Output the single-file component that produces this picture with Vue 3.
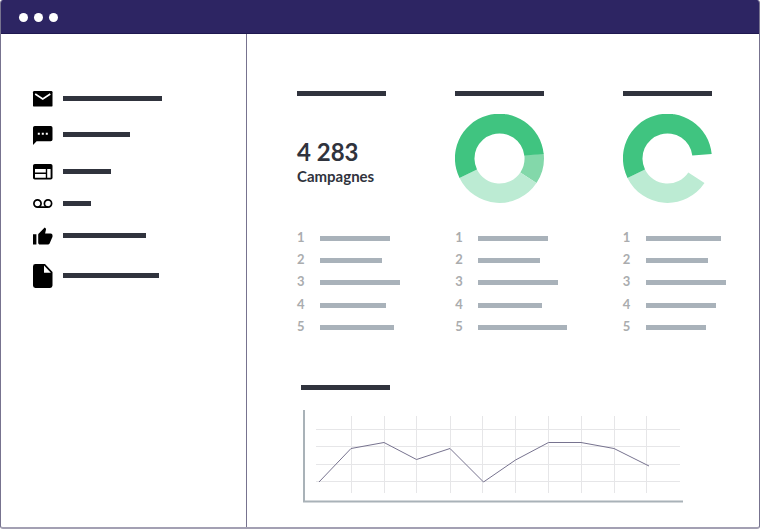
<script setup>
const links = [
  { name: 'E-mails', icon: 'mail', height: 16, width: 99 },
  { name: 'SMS', icon: 'chat', height: 19, width: 67 },
  { name: 'Pages', icon: 'web', height: 16, width: 48 },
  { name: 'Voice', icon: 'voice', height: 10, width: 28 },
  { name: 'Social', icon: 'like', height: 17, width: 83 },
  { name: 'Files', icon: 'file', height: 24, width: 96 }
]

const columns = [
  { kind: 'count', bars: [70, 62, 80, 66, 74] },
  { kind: 'full', bars: [70, 62, 80, 64, 89] },
  { kind: 'open', bars: [75, 62, 80, 70, 60] }
]

const gridX = [49, 82, 114, 148, 180, 213, 246, 279, 312, 344]
const gridY = [19, 36, 54, 71]
const points = '17,72 49,38.5 82,32.5 114.5,49.5 148,38.5 181.5,72 213.5,50 246.5,32.5 279,32.5 312,38.5 347,56'
</script>

<template>
  <div class="window">
    <header class="titlebar">
      <span class="dot"></span>
      <span class="dot"></span>
      <span class="dot"></span>
    </header>

    <div class="body">
      <nav class="sidebar">
        <a v-for="link in links" :key="link.icon" class="link" href="#" :aria-label="link.name">
          <svg class="icon" width="20" :height="link.height" :viewBox="`0 0 20 ${link.height}`" aria-hidden="true">
            <template v-if="link.icon === 'mail'">
              <rect width="19.5" height="15.6" rx="1.2" />
              <path class="cut" d="M2.2 3 9.75 7.9 17.3 3" stroke-width="1.7" />
            </template>
            <template v-else-if="link.icon === 'chat'">
              <path d="M1.8 0H17.7a1.8 1.8 0 0 1 1.8 1.8V13.4a1.8 1.8 0 0 1-1.8 1.8H3.6L0 19V1.8A1.8 1.8 0 0 1 1.8 0Z" />
              <path class="hole" d="M4.8 6.7h2v2h-2zM8.8 6.7h2v2h-2zM12.8 6.7h2v2h-2z" />
            </template>
            <template v-else-if="link.icon === 'web'">
              <rect width="19.5" height="15.6" rx="1.8" />
              <path class="hole" d="M2 5H12.8V8.6H2zM2 10H12.8V13.8H2zM14.2 5H17.6V13.8H14.2z" />
            </template>
            <template v-else-if="link.icon === 'voice'">
              <circle class="line" cx="4.5" cy="4.5" r="3.6" stroke-width="1.7" />
              <circle class="line" cx="15" cy="4.5" r="3.6" stroke-width="1.7" />
              <path class="line" d="M4.5 8.2H15" stroke-width="1.7" />
            </template>
            <template v-else-if="link.icon === 'like'">
              <path d="M0 6.2H3.4V16.6H0zM19.5 7.2a1.8 1.8 0 0 0-1.8-1.8H12.1L13 1.4c0-.5-.1-.9-.4-1.1L11.7-.4 5.8 5.4c-.4.3-.6.8-.6 1.3v8.1c0 1 .8 1.8 1.8 1.8h8c.7 0 1.3-.4 1.6-1.1l2.7-6.2c.1-.2.2-.4.2-.7z" />
            </template>
            <template v-else>
              <path d="M2.4 0H12L19.5 8V21.6A2.4 2.4 0 0 1 17.1 24H2.4A2.4 2.4 0 0 1 0 21.6V2.4A2.4 2.4 0 0 1 2.4 0Z" />
              <path class="hole" d="M11 1.6V8.8H17.9z" />
            </template>
          </svg>
          <span class="bar" :style="{ width: link.width + 'px' }"></span>
        </a>
      </nav>

      <main class="main">
        <div class="columns">
          <section v-for="column in columns" :key="column.kind" class="column">
            <div class="bar heading"></div>

            <div v-if="column.kind === 'count'" class="figure count">
              <strong class="number">4 283</strong>
              <span class="caption">Campagnes</span>
            </div>
            <div v-else class="figure">
              <svg width="89" height="89" viewBox="-44.5 -44.5 89 89" aria-hidden="true">
                <path v-if="column.kind === 'full'" fill="#83d8aa" d="M44.2-5A44.5 44.5 0 0 1 37 24.6L20.8 13.9A25 25 0 0 0 24.8-3.4Z" />
                <path fill="#bcebd3" d="M37 24.6A44.5 44.5 0 0 1-40 19.4L-22.5 10.9A25 25 0 0 0 20.8 13.9Z" />
                <path fill="#40c480" d="M-40 19.4A44.5 44.5 0 1 1 44.2-4.6L24.8-3A25 25 0 1 0-22.5 10.9Z" />
              </svg>
            </div>

            <ol class="ranking">
              <li v-for="(width, index) in column.bars" :key="index" class="rank">
                <span class="position">{{ index + 1 }}</span>
                <span class="bar muted" :style="{ width: width + 'px' }"></span>
              </li>
            </ol>
          </section>
        </div>

        <section class="chart">
          <div class="bar heading"></div>
          <svg class="plot" viewBox="-1 0 382 93" aria-hidden="true">
            <path v-for="x in gridX" :key="'x' + x" class="grid" :d="`M${x + 0.5} 6V83`" />
            <path v-for="y in gridY" :key="'y' + y" class="grid" :d="`M14 ${y + 0.5}H378`" />
            <path class="axis" d="M2 0V91.5H381" />
            <polyline class="trend" :points="points" />
          </svg>
        </section>
      </main>
    </div>
  </div>
</template>

<style>
body {
  margin: 0;
  background: #fff;
}
</style>

<style scoped>
.window {
  box-sizing: border-box;
  display: flex;
  flex-direction: column;
  min-height: 100vh;
  overflow: hidden;
  border: 1px solid #77738f;
  border-top: 0;
  border-bottom: 2px solid #a3a0b3;
  border-radius: 3px;
  background: #fff;
  color: #30333d;
  font-family: Lato, "Liberation Sans", sans-serif;
}

.titlebar {
  box-sizing: border-box;
  display: flex;
  align-items: center;
  gap: 6px;
  height: 34px;
  margin: 0 -1px;
  padding: 1px 19px 0;
  border-bottom: 1px solid #1f1850;
  background: #2d2563;
}

.dot {
  width: 9px;
  height: 9px;
  border-radius: 50%;
  background: #fff;
}

.body {
  display: flex;
  flex: 1;
}

.sidebar {
  box-sizing: border-box;
  display: flex;
  flex: none;
  flex-direction: column;
  gap: 19px;
  width: 246px;
  padding: 57px 32px;
  border-right: 1px solid #77738f;
}

.link {
  display: flex;
  align-items: center;
  gap: 10px;
}

.icon {
  flex: none;
  overflow: visible;
  fill: #000;
}

.hole {
  fill: #fff;
}

.cut {
  fill: none;
  stroke: #fff;
}

.line {
  fill: none;
  stroke: #000;
}

.bar {
  height: 5px;
  background: #30333d;
}

.link .bar {
  margin-bottom: 2px;
}

.heading {
  width: 89px;
}

.main {
  flex: 1;
  min-width: 0;
  padding: 57px 32px 23px 50px;
}

.columns {
  display: grid;
  grid-template-columns: 158fr 167fr 104fr;
}

.figure {
  box-sizing: border-box;
  height: 89px;
  margin-top: 18px;
}

.figure svg {
  display: block;
}

.count {
  display: flex;
  flex-direction: column;
  justify-content: center;
  padding-top: 6px;
}

.number {
  font-size: 24px;
  font-weight: 700;
  line-height: 28px;
}

.caption {
  font-size: 15px;
  font-weight: 700;
  line-height: 20px;
}

.ranking {
  display: grid;
  grid-auto-rows: 1fr;
  height: 112px;
  margin: 24px 0 0;
  padding: 0;
  list-style: none;
}

.rank {
  display: grid;
  grid-template-columns: 23px auto;
  align-items: center;
  justify-content: start;
}

.position {
  padding-bottom: 3px;
  color: #aaacae;
  font-size: 13px;
  font-weight: 700;
  line-height: 16px;
}

.muted {
  background: #a9b2ba;
}

.chart {
  margin-top: 46px;
  padding: 0 44px 0 4px;
}

.plot {
  display: block;
  width: 100%;
  margin-top: 20px;
}

.grid {
  stroke: #e6e6e8;
}

.axis {
  fill: none;
  stroke: #a9b2b8;
  stroke-width: 2;
}

.trend {
  fill: none;
  stroke: #77738f;
}
</style>
